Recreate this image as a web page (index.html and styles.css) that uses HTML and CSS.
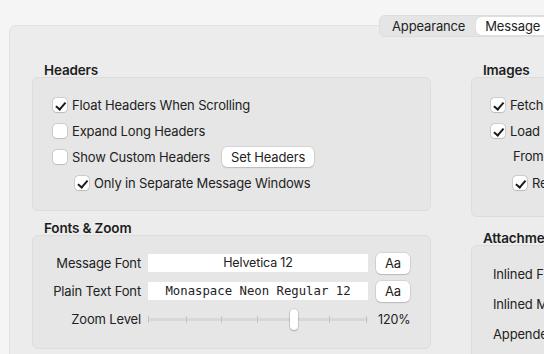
FILE: index.html
```html
<!DOCTYPE html>
<html lang="en">
<head>
  <meta charset="UTF-8">
  <title>Mail Settings - Viewing</title>
  <link rel="stylesheet" href="styles.css">
</head>
<body>
  <div class="tabbar">
    <div class="segmented">
      <span class="seg">Appearance</span>
      <span class="seg active">Message</span>
    </div>
  </div>

  <div class="panel">
    <div class="column left">
      <!-- Headers -->
      <section class="group headers">
        <h2>Headers</h2>
        <div class="box">
          <label class="check"><span class="cb on"></span>Float Headers When Scrolling</label>
          <label class="check"><span class="cb"></span>Expand Long Headers</label>
          <div class="check">
            <span class="cb"></span>Show Custom Headers
            <button class="btn">Set Headers</button>
          </div>
          <label class="check sub"><span class="cb on"></span>Only in Separate Message Windows</label>
        </div>
      </section>

      <!-- Fonts -->
      <section class="group fonts">
        <h2>Fonts &amp; Zoom</h2>
        <div class="box form">
          <span class="lbl">Message Font</span>
          <span class="field">Helvetica 12</span>
          <button class="btn small">Aa</button>

          <span class="lbl">Plain Text Font</span>
          <span class="field mono">Monaspace Neon Regular 12</span>
          <button class="btn small">Aa</button>

          <span class="lbl">Zoom Level</span>
          <div class="slider">
            <div class="track"></div>
            <i style="left:0.5%"></i><i style="left:17.7%"></i><i style="left:33.6%"></i>
            <i style="left:50%"></i><i style="left:82.7%"></i><i style="left:99.5%"></i>
            <span class="thumb" style="left:66.4%"></span>
          </div>
          <span class="pct">120%</span>
        </div>
      </section>
    </div>

    <div class="column right">
      <!-- Images -->
      <section class="group images">
        <h2>Images</h2>
        <div class="box">
          <label class="check"><span class="cb on"></span>Fetch Remote Content</label>
          <label class="check"><span class="cb on"></span>Load Remote Images</label>
          <div class="check text">From Known Senders</div>
          <label class="check sub"><span class="cb on"></span>Require Approval</label>
        </div>
      </section>

      <!-- Attachments -->
      <section class="group attach">
        <h2>Attachments</h2>
        <div class="box">
          <div class="row">Inlined Files</div>
          <div class="row">Inlined Media</div>
          <div class="row">Appended Files</div>
        </div>
      </section>
    </div>
  </div>
</body>
</html>
```

FILE: styles.css
```css
body {
  margin: 0;
  background: #f5f5f5;
  font-family: 'Inter', 'Liberation Sans', sans-serif;
  font-size: 13px;
  letter-spacing: -0.15px;
  color: #222222;
  overflow: hidden;
  width: 544px;
  height: 354px;
}

.tabbar {
  padding: 15px 0 0 379px;
  margin-bottom: -12px;
  position: relative;
  z-index: 1;
  height: 22px;
}

.segmented {
  display: flex;
  width: 220px;
  height: 22px;
  padding: 1px;
  box-sizing: border-box;
  background: #e5e5e5;
  border: 1px solid #dddddd;
  border-radius: 6px;
}

.seg {
  display: flex;
  align-items: center;
  padding: 0 11px;
  line-height: 18px;
}

.seg.active {
  background: #ffffff;
  border-radius: 5px;
  padding: 0 9px;
  box-shadow: 0 0 1px rgba(0, 0, 0, 0.25);
}

.panel {
  display: flex;
  gap: 40px;
  width: 640px;
  height: 400px;
  margin-left: 9px;
  padding: 36px 0 0 22px;
  box-sizing: border-box;
  background: #ececec;
  border: 1px solid #e3e3e3;
  border-radius: 7px;
}

.column {
  display: flex;
  flex-direction: column;
}

.left { width: 399px; gap: 9px; }
.right { width: 200px; gap: 13px; }

.group h2 {
  font-size: 13.5px;
  font-weight: 600;
  line-height: 16px;
  margin: 0 0 -1px 12px;
  color: #1e1e1e;
}

.box {
  background: #e6e6e6;
  border: 1px solid #dcdcdc;
  border-radius: 6px;
  box-sizing: border-box;
}

.headers .box {
  height: 134px;
  padding: 14px 20px;
}

.check {
  display: flex;
  align-items: center;
  gap: 5px;
  height: 26px;
  white-space: nowrap;
}

.check.sub { padding-left: 22px; }

.cb {
  width: 14px;
  height: 14px;
  border-radius: 3.5px;
  background: #ffffff;
  box-shadow: 0 0 0 0.5px rgba(0, 0, 0, 0.22), 0 1px 1px rgba(0, 0, 0, 0.08);
  position: relative;
  flex: none;
}

.cb.on::after {
  content: "";
  position: absolute;
  left: 4.5px;
  top: 1.5px;
  width: 3.5px;
  height: 7.5px;
  border: solid #1b1b1b;
  border-width: 0 2px 2px 0;
  transform: rotate(40deg);
}

.btn {
  font: inherit;
  letter-spacing: inherit;
  color: #222222;
  background: #ffffff;
  border: none;
  border-radius: 5px;
  box-shadow: 0 0 0 0.5px rgba(0, 0, 0, 0.15), 0 1px 1.5px rgba(0, 0, 0, 0.12);
  height: 20px;
  padding: 0 9px;
  margin-left: 7px;
}

.btn.small {
  width: 34px;
  height: 21px;
  padding: 0;
  margin: 0;
}

.form {
  display: grid;
  grid-template-columns: 87px 220px 34px;
  grid-auto-rows: 22px;
  column-gap: 8px;
  row-gap: 6px;
  align-items: center;
  height: 114px;
  padding: 16px 20px;
}

.lbl {
  text-align: right;
  white-space: nowrap;
  justify-self: end;
  margin-right: -1px;
}

.field {
  background: #ffffff;
  height: 18px;
  line-height: 18px;
  text-align: center;
  font-size: 12.5px;
}

.field.mono {
  font-family: 'DejaVu Sans Mono', 'Liberation Mono', monospace;
  font-size: 12.3px;
  letter-spacing: 0;
}

.slider {
  position: relative;
  height: 22px;
}

.slider .track {
  position: absolute;
  left: 0;
  right: 0;
  top: 10px;
  height: 3px;
  background: #d8d8d8;
  border-radius: 2px;
}

.slider i {
  position: absolute;
  top: 8px;
  width: 1px;
  height: 7px;
  margin-left: -1px;
  background: #c4c4c4;
}

.thumb {
  position: absolute;
  top: 1px;
  width: 8px;
  height: 21px;
  margin-left: -4px;
  background: #ffffff;
  border-radius: 4px;
  box-shadow: 0 0 0 0.5px rgba(0, 0, 0, 0.18), 0 1px 2px rgba(0, 0, 0, 0.2);
}

.pct {
  font-size: 12.5px;
  margin-left: 2px;
  white-space: nowrap;
}

.images .box {
  height: 140px;
  padding: 14px 19px;
}

.images .check.text {
  padding-left: 22px;
  height: 24px;
}

.images .check.sub { padding-left: 22px; height: 30px; }

.attach .box {
  height: 120px;
  padding: 15px 21px;
}

.row {
  height: 30px;
  line-height: 26px;
  white-space: nowrap;
}
```
